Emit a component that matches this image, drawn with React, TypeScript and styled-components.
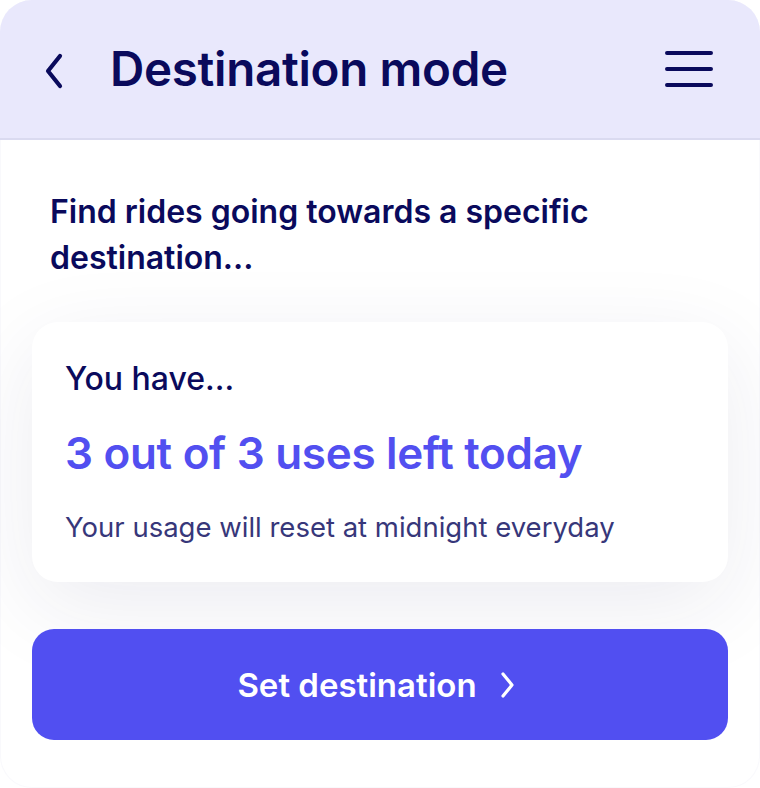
import React from "react";
import styled, { createGlobalStyle } from "styled-components";

const Global = createGlobalStyle`
  html, body { margin: 0; padding: 0; background: #ffffff; }
  body { font-family: Inter, "Noto Sans", sans-serif; -webkit-font-smoothing: antialiased; }
`;

const Frame = styled.div`
  width: 760px;
  height: 788px;
  box-sizing: border-box;
  border-radius: 32px;
  overflow: hidden;
  background: #ffffff;
  box-shadow: inset 0 0 0 1px rgba(238, 238, 245, 0.35);
  display: flex;
  flex-direction: column;
`;

const Header = styled.header`
  height: 140px;
  flex-shrink: 0;
  background: #e9e8fc;
  border-bottom: 2px solid #dadaf0;
  display: flex;
  align-items: center;
  padding: 0 46px 0 40px;
  box-sizing: border-box;
`;

const IconButton = styled.button`
  border: none;
  background: none;
  padding: 0;
  margin: 0;
  display: flex;
  align-items: center;
  justify-content: center;
  color: #0a0a5c;
  cursor: pointer;
`;

const Title = styled.h1`
  margin: 0 0 0 42px;
  flex: 1;
  font-size: 47.5px;
  font-weight: 600;
  letter-spacing: -0.3px;
  color: #0a0a5c;
  line-height: 1;
`;

const Body = styled.main`
  flex: 1;
  padding: 49px 32px 0 32px;
  display: flex;
  flex-direction: column;
`;

const Lead = styled.p`
  margin: 0 0 0 18px;
  font-size: 32px;
  font-weight: 600;
  line-height: 46px;
  color: #0a0a5c;
  max-width: 600px;
`;

const Card = styled.section`
  margin-top: 41px;
  background: #ffffff;
  border-radius: 26px;
  padding: 38px 33px 38px;
  box-shadow: 0 24px 90px rgba(30, 30, 90, 0.085);
  display: flex;
  flex-direction: column;
`;

const CardLabel = styled.div`
  font-size: 32px;
  font-weight: 500;
  color: #0a0a5c;
  line-height: 38px;
`;

const CardValue = styled.div`
  margin-top: 29px;
  font-size: 44px;
  font-weight: 600;
  color: #524ff0;
  line-height: 52px;
  letter-spacing: -0.3px;
`;

const CardNote = styled.div`
  margin-top: 31px;
  font-size: 27.5px;
  font-weight: 400;
  color: #37377a;
  line-height: 34px;
`;

const PrimaryButton = styled.button`
  margin-top: 47px;
  height: 111px;
  border: none;
  border-radius: 22px;
  background: #514ff1;
  color: #ffffff;
  font-family: Inter, "Noto Sans", sans-serif;
  font-size: 33px;
  font-weight: 600;
  display: flex;
  align-items: center;
  justify-content: center;
  gap: 22px;
  padding: 0 6px 0 0;
  cursor: pointer;
`;

const ChevronLeft = () => (
  <svg width="28" height="40" viewBox="0 0 28 40" fill="none">
    <path d="M20 7 L8 22 L20 37" stroke="currentColor" strokeWidth="4.2" strokeLinecap="round" strokeLinejoin="round" />
  </svg>
);

const Hamburger = () => (
  <svg width="50" height="40" viewBox="0 0 50 40" fill="none">
    <path d="M3 4 H47 M3 20 H47 M3 36 H47" stroke="currentColor" strokeWidth="4" strokeLinecap="round" />
  </svg>
);

const ChevronRight = () => (
  <svg width="18" height="28" viewBox="0 0 18 28" fill="none">
    <path d="M4 3 L13 14 L4 25" stroke="currentColor" strokeWidth="3.2" strokeLinecap="round" strokeLinejoin="round" />
  </svg>
);

export default function App() {
  return (
    <>
      <Global />
      <Frame>
        <Header>
          <IconButton aria-label="Back">
            <ChevronLeft />
          </IconButton>
          <Title>Destination mode</Title>
          <IconButton aria-label="Menu">
            <Hamburger />
          </IconButton>
        </Header>
        <Body>
          <Lead>Find rides going towards a specific destination...</Lead>
          <Card>
            <CardLabel>You have...</CardLabel>
            <CardValue>3 out of 3 uses left today</CardValue>
            <CardNote>Your usage will reset at midnight everyday</CardNote>
          </Card>
          <PrimaryButton>
            Set destination
            <ChevronRight />
          </PrimaryButton>
        </Body>
      </Frame>
    </>
  );
}
